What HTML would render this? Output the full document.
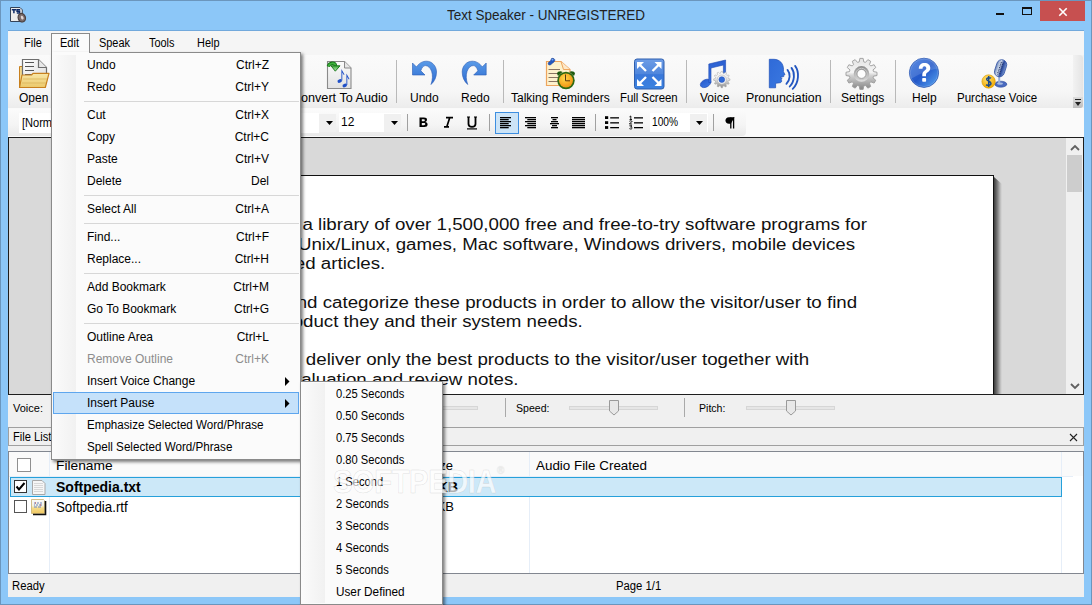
<!DOCTYPE html>
<html><head><meta charset="utf-8">
<style>
*{margin:0;padding:0;box-sizing:border-box}
html,body{width:1092px;height:605px;overflow:hidden;background:#8cc7f8}
body{position:relative;font-family:"Liberation Sans",sans-serif;font-size:12px;color:#000}
.a{position:absolute}
.t{position:absolute;white-space:nowrap;line-height:1}
.sep{position:absolute;width:1px;background:#b9b9b9}
.lbl{position:absolute;white-space:nowrap;line-height:1;font-size:12px;top:91.7px;color:#000}
.mi{position:absolute;left:87px;white-space:nowrap;line-height:1;font-size:12px}
.sc{position:absolute;right:823px;white-space:nowrap;line-height:1;font-size:12px;text-align:right}
.ms{position:absolute;left:84px;width:215px;height:1px;background:#d7d7d7}
.si{position:absolute;left:336px;white-space:nowrap;line-height:1;font-size:12px}
.pg{position:absolute;white-space:nowrap;line-height:1;font-size:16px;color:#111;transform:scaleX(1.169);transform-origin:100% 0}
</style></head><body>
<!-- window frame -->
<div class="a" style="left:0;top:0;width:1092px;height:605px;border:1px solid #6b96bd;background:#8cc7f8"></div>
<div class="t" style="left:447px;top:7px;font-size:15px;color:#222;transform:scaleX(0.9);transform-origin:0 0">Text Speaker - UNREGISTERED</div>
<!-- min / max / close -->
<div class="a" style="left:996px;top:13px;width:8px;height:2px;background:#111"></div>
<div class="a" style="left:1022px;top:7px;width:10px;height:8px;border:1px solid #111;border-top-width:2px"></div>
<div class="a" style="left:1040px;top:1px;width:45px;height:20px;background:#c75050"></div>
<svg class="a" style="left:1058px;top:7px" width="10" height="10" viewBox="0 0 10 10"><path d="M1.3 1.3L8.7 8.7M8.7 1.3L1.3 8.7" stroke="#fff" stroke-width="1.6"/></svg>

<!-- client -->
<div class="a" style="left:8px;top:31px;width:1076px;height:566px;background:#f0f0f0"></div>
<div class="a" style="left:8px;top:30px;width:1076px;height:1px;background:#72a9dc"></div>
<div class="a" style="left:8px;top:31px;width:1076px;height:24px;background:#f5f5f5"></div>
<!-- menubar -->
<div class="t" style="left:24px;top:37.3px;font-size:12px;transform:scaleX(0.92);transform-origin:0 0">File</div>
<div class="t" style="left:99px;top:37.3px;font-size:12px;transform:scaleX(0.91);transform-origin:0 0">Speak</div>
<div class="t" style="left:149px;top:37.3px;font-size:12px;transform:scaleX(0.91);transform-origin:0 0">Tools</div>
<div class="t" style="left:197px;top:37.3px;font-size:12px;transform:scaleX(0.91);transform-origin:0 0">Help</div>

<!-- main toolbar band -->
<div class="a" style="left:8px;top:55px;width:1075px;height:53px;background:linear-gradient(#fafafa,#f6f6f6 70%,#ececec);border-radius:0 3px 3px 0"></div>
<div class="a" style="left:1073px;top:55px;width:10px;height:53px;background:linear-gradient(90deg,#f2f2f2,#e4e4e4);border-radius:0 3px 3px 0"></div>
<div class="a" style="left:1073px;top:97px;width:10px;height:11px;background:linear-gradient(#dcdcdc,#bdbdbd);border-radius:0 0 3px 0"></div>
<svg class="a" style="left:1074px;top:98px" width="8" height="9" viewBox="0 0 8 9"><rect x="1" y="1" width="6" height="1" fill="#222"/><path d="M1 4H7L4 8Z" fill="#222"/></svg>

<div class="lbl" style="left:19px">Open</div>
<div class="lbl" style="left:301px;transform:scaleX(1.053);transform-origin:0 0">onvert To Audio</div>
<div class="sep" style="left:396px;top:60px;height:43px"></div>
<div class="lbl" style="left:410px">Undo</div>
<div class="lbl" style="left:461px">Redo</div>
<div class="sep" style="left:503px;top:60px;height:43px"></div>
<div class="lbl" style="left:511px">Talking Reminders</div>
<div class="lbl" style="left:620px;transform:scaleX(0.95);transform-origin:0 0">Full Screen</div>
<div class="sep" style="left:686px;top:60px;height:43px"></div>
<div class="lbl" style="left:700px">Voice</div>
<div class="lbl" style="left:746px;transform:scaleX(1.03);transform-origin:0 0">Pronunciation</div>
<div class="sep" style="left:830px;top:60px;height:43px"></div>
<div class="lbl" style="left:841px">Settings</div>
<div class="sep" style="left:895px;top:60px;height:43px"></div>
<div class="lbl" style="left:912px">Help</div>
<div class="lbl" style="left:957px;transform:scaleX(0.96);transform-origin:0 0">Purchase Voice</div>

<!-- format toolbar band -->
<div class="a" style="left:8px;top:108px;width:1076px;height:29px;background:#fafafa"></div>
<div class="a" style="left:8px;top:109px;width:738px;height:27px;background:linear-gradient(#fbfbfb,#f4f4f4 60%,#e9e9e9);border-radius:0 4px 4px 0"></div>
<div class="a" style="left:19px;top:113px;width:300px;height:20px;background:#fff"></div>
<div class="t" style="left:22px;top:116.5px;font-size:12px;color:#000;transform:scaleX(0.92);transform-origin:0 0">[Normal]</div>
<div class="a" style="left:319px;top:114px;width:17px;height:18px;background:#f0f0f0"></div>
<svg class="a" style="left:326px;top:120px" width="8" height="6"><path d="M0 1H7L3.5 5Z" fill="#000"/></svg>
<div class="a" style="left:339px;top:113px;width:62px;height:19px;background:#fff"></div>
<div class="a" style="left:384px;top:114px;width:17px;height:18px;background:#f0f0f0"></div>
<div class="t" style="left:341px;top:116px;font-size:12px">12</div>
<svg class="a" style="left:391px;top:120px" width="8" height="6"><path d="M0 1H7L3.5 5Z" fill="#000"/></svg>
<div class="sep" style="left:407px;top:114px;height:17px;background:#a0a0a0"></div>
<svg class="a" style="left:415px;top:114px" width="66" height="18" viewBox="0 0 66 18">
 <path d="M4.5 3.5H9C11 3.5 12 4.4 12 5.8C12 7 11.2 7.8 10 8C11.6 8.2 12.6 9.1 12.6 10.5C12.6 12.2 11.4 13 9.3 13H4.5Z M6.8 5.3V7.3H8.6C9.4 7.3 9.8 6.9 9.8 6.3C9.8 5.7 9.4 5.3 8.6 5.3Z M6.8 9V11.2H8.9C9.8 11.2 10.3 10.8 10.3 10.1C10.3 9.4 9.8 9 8.9 9Z" fill="#000"/>
 <path d="M31 3.6H38M34.8 3.6L31.8 12.8M29 12.8H34" stroke="#000" stroke-width="1.7" fill="none"/>
 <path d="M53.5 3V10C53.5 12 54.5 12.8 57 12.8C59.5 12.8 60.5 12 60.5 10V3" stroke="#000" stroke-width="1.8" fill="none"/>
 <path d="M52 3H55M59 3H62" stroke="#000" stroke-width="1"/>
 <rect x="52" y="14.3" width="10" height="1.2" fill="#000"/>
</svg>
<div class="sep" style="left:489px;top:114px;height:17px;background:#a0a0a0"></div>
<div class="a" style="left:495px;top:112px;width:24px;height:22px;background:#cce4f7;border:1px solid #3d8ee0"></div>
<svg class="a" style="left:0;top:117px" width="660" height="14"><g fill="#000"><rect x="500" y="0" width="11" height="1.3"/><rect x="500" y="2" width="8.699999999999989" height="1.3"/><rect x="500" y="4" width="11" height="1.3"/><rect x="500" y="6" width="8.699999999999989" height="1.3"/><rect x="500" y="8" width="11" height="1.3"/><rect x="500" y="10" width="8.699999999999989" height="1.3"/><rect x="525" y="0" width="11" height="1.3"/><rect x="527.3" y="2" width="8.700000000000045" height="1.3"/><rect x="525" y="4" width="11" height="1.3"/><rect x="527.3" y="6" width="8.700000000000045" height="1.3"/><rect x="525" y="8" width="11" height="1.3"/><rect x="527.3" y="10" width="8.700000000000045" height="1.3"/><rect x="551" y="0" width="7" height="1.3"/><rect x="552.5" y="2" width="4.0" height="1.3"/><rect x="551" y="4" width="7" height="1.3"/><rect x="550" y="6" width="9" height="1.3"/><rect x="552" y="8" width="5" height="1.3"/><rect x="551" y="10" width="7" height="1.3"/><rect x="572" y="0" width="13" height="1.3"/><rect x="572" y="2" width="13" height="1.3"/><rect x="572" y="4" width="13" height="1.3"/><rect x="572" y="6" width="13" height="1.3"/><rect x="572" y="8" width="13" height="1.3"/><rect x="572" y="10" width="13" height="1.3"/></g></svg>
<div class="sep" style="left:595px;top:114px;height:17px;background:#a0a0a0"></div>
<svg class="a" style="left:600px;top:115px" width="50" height="16" viewBox="600 115 50 16"><g fill="#000"><rect x="605" y="116.2" width="3.2" height="2.8"/><rect x="605" y="121.2" width="3.2" height="2.8"/><rect x="605" y="126.1" width="3.2" height="2.8"/><rect x="610.2" y="117.2" width="8.8" height="1.3"/><rect x="634" y="117.2" width="9" height="1.3"/><rect x="610.2" y="122.2" width="8.8" height="1.3"/><rect x="634" y="122.2" width="9" height="1.3"/><rect x="610.2" y="127" width="8.8" height="1.3"/><rect x="634" y="127" width="9" height="1.3"/></g><g fill="none" stroke="#000" stroke-width="0.9"><path d="M629.5 116.8L630.8 116V119.3M629.6 119.5H632"/><path d="M629.4 121.3C630 120.6 632 120.6 632 121.5C632 122.3 629.5 123 629.4 124H632.1"/><path d="M629.4 125.8H632L630.6 127C631.8 127 632.2 127.6 632 128.4C631.7 129.2 630 129.1 629.4 128.6"/></g></svg>
<div class="a" style="left:650px;top:113px;width:58px;height:19px;background:#fff"></div>
<div class="a" style="left:690px;top:114px;width:17px;height:18px;background:#f0f0f0"></div>
<div class="t" style="left:652px;top:116px;font-size:12px;transform:scaleX(0.85);transform-origin:0 0">100%</div>
<svg class="a" style="left:696px;top:120px" width="8" height="6"><path d="M0 1H7L3.5 5Z" fill="#000"/></svg>
<div class="sep" style="left:713px;top:114px;height:17px;background:#a0a0a0"></div>
<svg class="a" style="left:722px;top:115px" width="16" height="16" viewBox="722 115 16 16"><path d="M730.8 117.5V128.5M733.6 117.5V128.5" stroke="#000" stroke-width="1.3"/><path d="M734.6 117.3H729C726.6 117.3 725.5 118.7 725.5 120.6C725.5 122.5 726.6 123.8 729 123.8H730.8Z" fill="#000"/></svg>

<!-- editor -->
<div class="a" style="left:8px;top:137px;width:1076px;height:258px;background:#d9d9d9;border:1px solid #1e1e1e;overflow:hidden">
 <div class="a" style="left:91px;top:37px;width:894px;height:240px;background:#fff;border-top:1px solid #111;border-right:1px solid #111"></div>
 <div class="a" style="left:985px;top:39px;width:8px;height:220px;background:linear-gradient(90deg,rgba(0,0,0,0.72),rgba(0,0,0,0.45) 40%,rgba(0,0,0,0.12) 80%,rgba(0,0,0,0));clip-path:polygon(0 0,100% 7px,100% 100%,0 100%)"></div>
 <div class="a" style="left:1057px;top:0;width:18px;height:256px;background:#f0f0f0"></div>
 <div class="a" style="left:1058px;top:17px;width:15px;height:37px;background:#cdcdcd"></div>
 <svg class="a" style="left:1061px;top:6px" width="10" height="7"><path d="M1 6L5 2L9 6" stroke="#606060" stroke-width="1.8" fill="none"/></svg>
 <svg class="a" style="left:1061px;top:245px" width="10" height="7"><path d="M1 1L5 5L9 1" stroke="#606060" stroke-width="1.8" fill="none"/></svg>
</div>
<div class="pg" style="right:225.4px;top:217.3px">Softpedia is a library of over 1,500,000 free and free-to-try software programs for</div>
<div class="pg" style="right:237.0px;top:236.7px">Windows and Unix/Linux, games, Mac software, Windows drivers, mobile devices</div>
<div class="pg" style="right:706.4px;top:256.0px">and IT-related articles.</div>
<div class="pg" style="right:235.4px;top:294.7px">We review and categorize these products in order to allow the visitor/user to find</div>
<div class="pg" style="right:508.9px;top:314.0px">the exact product they and their system needs.</div>
<div class="pg" style="right:283.4px;top:352.3px">We strive to deliver only the best products to the visitor/user together with</div>
<div class="pg" style="right:573.6px;top:371.6px">self-made evaluation and review notes.</div>
<!-- voice bar -->
<div class="t" style="left:13px;top:403px;font-size:11px">Voice:</div>
<div class="a" style="left:440px;top:406px;width:38px;height:4px;background:#e6e6e6;border:1px solid #d6d6d6"></div>
<div class="sep" style="left:505px;top:398px;height:19px;background:#a9a9a9"></div>
<div class="t" style="left:516px;top:403px;font-size:11px;transform:scaleX(0.96);transform-origin:0 0">Speed:</div>
<div class="a" style="left:569px;top:406px;width:89px;height:4px;background:#e6e6e6;border:1px solid #d6d6d6"></div>
<svg class="a" style="left:609px;top:400px" width="11" height="16" viewBox="0 0 11 16"><path d="M0.5 0.5H9.5V11L5 15L0.5 11Z" fill="#e8e8e8" stroke="#9a9a9a"/></svg>
<div class="sep" style="left:684px;top:398px;height:19px;background:#a9a9a9"></div>
<div class="t" style="left:699px;top:403px;font-size:11px;transform:scaleX(0.96);transform-origin:0 0">Pitch:</div>
<div class="a" style="left:746px;top:406px;width:89px;height:4px;background:#e6e6e6;border:1px solid #d6d6d6"></div>
<svg class="a" style="left:786px;top:400px" width="11" height="16" viewBox="0 0 11 16"><path d="M0.5 0.5H9.5V11L5 15L0.5 11Z" fill="#e8e8e8" stroke="#9a9a9a"/></svg>

<!-- file list bar -->
<div class="a" style="left:8px;top:427px;width:1076px;height:19px;background:#f0f0f0;border:1px solid #a0a0a0"></div>
<div class="t" style="left:13px;top:431px;font-size:12px;transform:scaleX(0.93);transform-origin:0 0">File List</div>
<svg class="a" style="left:1069px;top:433px" width="9" height="9"><path d="M1 1L8 8M8 1L1 8" stroke="#222" stroke-width="1.1"/></svg>

<!-- list -->
<div class="a" style="left:8px;top:451px;width:1076px;height:123px;background:#fff;border:1px solid #828790"></div>
<div class="a" style="left:9px;top:452px;width:1074px;height:24px;background:#fafafa"></div>
<div class="a" style="left:9px;top:476px;width:1064px;height:1px;background:#e6eef8"></div>
<div class="a" style="left:49px;top:452px;width:1px;height:121px;background:#e6eef8"></div>
<div class="a" style="left:529px;top:452px;width:1px;height:121px;background:#e6eef8"></div>
<div class="a" style="left:1061px;top:452px;width:1px;height:121px;background:#e6eef8"></div>
<div class="a" style="left:17px;top:458px;width:14px;height:14px;border:1px solid #8f8f8f;background:#fff"></div>
<div class="t" style="left:56px;top:459px;font-size:13px;transform:scaleX(1.06);transform-origin:0 0">Filename</div>
<div class="t" style="right:639px;top:459px;font-size:13px">Size</div>
<div class="t" style="left:536px;top:459px;font-size:13px;transform:scaleX(1.03);transform-origin:0 0">Audio File Created</div>
<div class="a" style="left:10px;top:477px;width:1052px;height:20px;background:#cce8f8;border:1px solid #26a0da"></div>
<div class="a" style="left:14px;top:480px;width:13px;height:13px;border:1px solid #333;background:#fff"></div>
<svg class="a" style="left:14px;top:480px" width="13" height="13"><path d="M2.5 6.5L5 9.5L10.5 3" stroke="#000" stroke-width="2" fill="none"/></svg>
<div class="t" style="left:56px;top:480px;font-size:14px;font-weight:bold">Softpedia.txt</div>
<div class="t" style="right:634px;top:480px;font-size:14px;font-weight:bold">0 KB</div>
<div class="a" style="left:14px;top:500px;width:13px;height:13px;border:1px solid #555;background:#fff"></div>
<div class="t" style="left:56px;top:499.5px;font-size:14px;transform:scaleX(0.95);transform-origin:0 0">Softpedia.rtf</div>
<div class="t" style="right:638px;top:500px;font-size:13px">0 KB</div>

<!-- status bar -->
<div class="t" style="left:12px;top:580px;font-size:12px;transform:scaleX(0.94);transform-origin:0 0">Ready</div>
<div class="t" style="left:616px;top:580px;font-size:12px;transform:scaleX(0.94);transform-origin:0 0">Page 1/1</div>

<!-- ICONS -->
<!-- app icon -->
<svg class="a" style="left:6px;top:2px" width="24" height="24" viewBox="0 0 24 24">
 <path d="M4.5 5.5H14L16.3 7.8V19.5H4.5Z" fill="#ececec" stroke="#34445a" stroke-width="1"/>
 <path d="M5.8 7.8H10M7.9 7.8V11.2" stroke="#0d2a66" stroke-width="1.5"/>
 <path d="M14.2 7.6H11V9.3H13.6V11H10.8" stroke="#0d2a66" stroke-width="1.4" fill="none"/>
 <ellipse cx="15.8" cy="15.7" rx="3.6" ry="4.3" fill="#7a6c6c" stroke="#4a4040" stroke-width="1.2" transform="rotate(-20 15.8 15.7)"/>
 <ellipse cx="16.2" cy="15.6" rx="1.3" ry="2" fill="#e0d6d6" transform="rotate(-20 16.2 15.6)"/>
</svg>
<!-- Open -->
<svg class="a" style="left:17px;top:57px" width="34" height="33" viewBox="0 0 34 33">
 <defs><linearGradient id="fold" x1="0" y1="0" x2="0" y2="1"><stop offset="0" stop-color="#f8e7a8"/><stop offset="1" stop-color="#ecc96a"/></linearGradient>
 <linearGradient id="docg" x1="0" y1="0" x2="1" y2="1"><stop offset="0" stop-color="#ffffff"/><stop offset="1" stop-color="#dedede"/></linearGradient></defs>
 <path d="M2.5 9.5H6V30.5H2.5Z" fill="#f2d68a" stroke="#c8801e" stroke-width="1"/>
 <path d="M5.5 2.5H21.5L29.5 10.5V22H5.5Z" fill="url(#docg)" stroke="#6e6e6e" stroke-width="1.2"/>
 <path d="M21.5 2.5V10.5H29.5" fill="#e8e8e8" stroke="#6e6e6e" stroke-width="1.2"/>
 <path d="M8 5.5H17M8 9.5H17M8 13.5H17M8 17.5H17" stroke="#555" stroke-width="1"/>
 <path d="M2.5 30.5L5 18H14.5L16 16.3H32L28.3 30.5Z" fill="url(#fold)" stroke="#c8801e" stroke-width="1.2" stroke-linejoin="round"/>
 <path d="M6 22H30M5 26H29" stroke="#d9b45a" stroke-width="0.8"/>
</svg>
<!-- Convert To Audio -->
<svg class="a" style="left:322px;top:56px" width="34" height="34" viewBox="0 0 34 34">
 <defs><linearGradient id="cdoc" x1="0" y1="0" x2="0" y2="1"><stop offset="0" stop-color="#fbfbfb"/><stop offset="1" stop-color="#e2e2e2"/></linearGradient>
 <linearGradient id="garr" x1="0" y1="0" x2="0" y2="1"><stop offset="0" stop-color="#3aa63a"/><stop offset="1" stop-color="#b8f0b0"/></linearGradient></defs>
 <path d="M5.5 5.5H22.5L29 12V32.5H5.5Z" fill="url(#cdoc)" stroke="#8a8a8a" stroke-width="1.1"/>
 <path d="M22.5 5.5V12H29" fill="#e6e6e6" stroke="#8a8a8a" stroke-width="1"/>
 <path d="M6.3 10.5C7.5 6.8 12.8 5.8 13.6 10" fill="none" stroke="#137013" stroke-width="3.4" stroke-linecap="butt"/><path d="M6.3 10.5C7.5 6.8 12.8 5.8 13.6 10" fill="none" stroke="#3eb03e" stroke-width="1.8"/><path d="M9 9.8H18L13.3 15.2Z" fill="url(#garr)" stroke="#137013" stroke-width="0.9" stroke-linejoin="round"/>
 <g fill="#2050c8">
  <ellipse cx="17.7" cy="25" rx="2.3" ry="1.7" transform="rotate(-25 17.7 25)"/>
  <path d="M19.4 24.5V13L22.5 18.5L21.8 19L20.3 16.5V24.5Z"/>
  <ellipse cx="22.7" cy="29.5" rx="2.3" ry="1.7" transform="rotate(-25 22.7 29.5)"/>
  <path d="M24.4 29V17.5L27.5 23L26.8 23.5L25.3 21V29Z"/>
 </g>
</svg>
<!-- Undo / Redo -->
<svg class="a" style="left:406px;top:56px" width="88" height="34" viewBox="0 0 88 34">
 <defs><linearGradient id="ub" x1="0" y1="0" x2="0" y2="1"><stop offset="0" stop-color="#5a9be8"/><stop offset="1" stop-color="#2d6ad0"/></linearGradient></defs>
 <g id="undo">
 <path d="M6.5 7L10.5 11C13 7 16.8 5.2 20.5 5.2C26 5.2 30.5 10 30.5 16C30.5 21 28.5 25.5 25 28.5C26.7 23.5 26.9 19 25.6 15.2C24.3 11.8 22 9.6 19.5 9.6C17.4 9.6 15.8 11.5 14.8 14.8L19 19H6.5Z" fill="url(#ub)" stroke="#2a5cb5" stroke-width="0.6"/>
 </g>
 <g transform="translate(86.7,0) scale(-1,1)">
 <path d="M6.5 7L10.5 11C13 7 16.8 5.2 20.5 5.2C26 5.2 30.5 10 30.5 16C30.5 21 28.5 25.5 25 28.5C26.7 23.5 26.9 19 25.6 15.2C24.3 11.8 22 9.6 19.5 9.6C17.4 9.6 15.8 11.5 14.8 14.8L19 19H6.5Z" fill="url(#ub)" stroke="#2a5cb5" stroke-width="0.6"/>
 </g>
</svg>
<!-- Talking Reminders -->
<svg class="a" style="left:540px;top:54px" width="40" height="40" viewBox="0 0 40 40">
 <defs><radialGradient id="cface" cx="0.4" cy="0.35" r="0.7"><stop offset="0" stop-color="#ffd84a"/><stop offset="1" stop-color="#f09010"/></radialGradient></defs>
 <path d="M6.5 7.5H21L30 15.5V31.5H6.5Z" fill="#fdf1cc" stroke="#eea55e" stroke-width="1.2"/>
 <path d="M21 7.5L23.5 15.5H30" fill="#fde8c8" stroke="#eea55e" stroke-width="1"/>
 <path d="M8.5 15.5H20M8.5 19.5H20M8.5 23.5H18M8.5 27.5H18" stroke="#8a7462" stroke-width="1"/>
 <path d="M11.5 4.5C13.5 3.8 15.2 5 14.8 6.8L13.5 8.5L12 9.5C10.5 11.5 8.5 11.5 8.2 10C7.9 8.8 9 7.6 10.3 7.2Z" fill="#2458c0" stroke="#183f90" stroke-width="0.5"/>
 <ellipse cx="12.5" cy="5.8" rx="1" ry="0.8" fill="#8ab4f0"/>
 <path d="M17 19.5C17.5 17.5 20.5 16.5 22.5 18L18 22Z" fill="#1e5a10"/>
 <path d="M35 19.5C34.5 17.5 31.5 16.5 29.5 18L34 22Z" fill="#1e5a10"/>
 <circle cx="26" cy="26.5" r="8.7" fill="#2e6a12"/>
 <circle cx="26" cy="26.5" r="7" fill="url(#cface)"/>
 <path d="M25.5 20.5V26.8H30" stroke="#5a3a10" stroke-width="1" fill="none"/>
</svg>
<!-- Full Screen -->
<svg class="a" style="left:630px;top:54px" width="40" height="40" viewBox="0 0 40 40">
 <defs><linearGradient id="fsb" x1="0" y1="0" x2="0" y2="1"><stop offset="0" stop-color="#6e9de6"/><stop offset="0.5" stop-color="#4f86dc"/><stop offset="0.52" stop-color="#3a78da"/><stop offset="1" stop-color="#3a82e0"/></linearGradient></defs>
 <rect x="4.5" y="5" width="29.5" height="30" rx="2.5" fill="url(#fsb)" stroke="#2f5fae" stroke-width="1"/>
 <g stroke="#fff" stroke-width="2.3" fill="#fff">
  <path d="M9 10L16 17M29.5 10L22.5 17M9 30L16 23M29.5 30L22.5 23" />
 </g>
 <g fill="#fff">
  <path d="M7 8H14L7 15Z"/><path d="M31.5 8H24.5L31.5 15Z"/><path d="M7 32H14L7 25Z"/><path d="M31.5 32H24.5L31.5 25Z"/>
 </g>
</svg>
<!-- Voice -->
<svg class="a" style="left:696px;top:54px" width="40" height="40" viewBox="0 0 40 40">
 <defs><linearGradient id="gear1" x1="0" y1="0" x2="0" y2="1"><stop offset="0" stop-color="#ffffff"/><stop offset="0.45" stop-color="#e8e8e8"/><stop offset="1" stop-color="#8a8a8a"/></linearGradient>
 <linearGradient id="nb" x1="0" y1="0" x2="0" y2="1"><stop offset="0" stop-color="#2a5ed0"/><stop offset="1" stop-color="#3a74e0"/></linearGradient></defs>
 <g fill="url(#nb)" stroke="#1c48b4" stroke-width="0.6">
 <ellipse cx="9.6" cy="29.4" rx="5.6" ry="3.7" transform="rotate(-28 9.6 29.4)"/>
 <path d="M12.8 28.5V10L29.6 6V24H27.4V11L15 14V28.5Z"/>
 </g>
 <g transform="translate(25.8 25.6)">
  <path d="M-1.10 -6.51 L-0.69 -8.17 L0.69 -8.17 L1.10 -6.51 L2.30 -6.19 L3.49 -7.42 L4.68 -6.73 L4.21 -5.09 L5.09 -4.21 L6.73 -4.68 L7.42 -3.49 L6.19 -2.30 L6.51 -1.10 L8.17 -0.69 L8.17 0.69 L6.51 1.10 L6.19 2.30 L7.42 3.49 L6.73 4.68 L5.09 4.21 L4.21 5.09 L4.68 6.73 L3.49 7.42 L2.30 6.19 L1.10 6.51 L0.69 8.17 L-0.69 8.17 L-1.10 6.51 L-2.30 6.19 L-3.49 7.42 L-4.68 6.73 L-4.21 5.09 L-5.09 4.21 L-6.73 4.68 L-7.42 3.49 L-6.19 2.30 L-6.51 1.10 L-8.17 0.69 L-8.17 -0.69 L-6.51 -1.10 L-6.19 -2.30 L-7.42 -3.49 L-6.73 -4.68 L-5.09 -4.21 L-4.21 -5.09 L-4.68 -6.73 L-3.49 -7.42 L-2.30 -6.19Z" fill="url(#gear1)" stroke="#a0a0a0" stroke-width="0.5"/>
  <circle r="4.6" fill="#f4f4f4" stroke="#b0b0b0" stroke-width="0.6"/>
  <circle r="2.9" fill="#2f6ad8" stroke="#1c48b4" stroke-width="0.5"/>
 </g>
</svg>
<!-- Pronunciation -->
<svg class="a" style="left:764px;top:54px" width="40" height="40" viewBox="0 0 40 40">
 <defs><linearGradient id="hd" x1="0" y1="0" x2="1" y2="1"><stop offset="0" stop-color="#2f6ad8"/><stop offset="1" stop-color="#3a78e0"/></linearGradient></defs>
 <path d="M5.3 5.3H10C15.5 5.3 19.5 9.5 19.5 15.3L19.4 17.5L21 20.7L19.3 21.5L19.8 22.5L16.3 23.3L18.2 24.5L17.1 25.3L17.6 26.5C17.8 27.8 17.2 28.5 16.2 28.7L11.6 29.3V33.8H5.3Z" fill="url(#hd)" stroke="#1d4fb8" stroke-width="0.7"/>
 <g fill="none" stroke="#2256c0" stroke-width="1.8" stroke-linecap="round">
  <path d="M23.5 15.9C26.5 19.5 26.5 25.5 22.4 29.8"/>
  <path d="M27.5 13.9C31 18.5 31 27 25.7 32.5"/>
  <path d="M31.1 11.9C35.3 17.5 35.3 28.5 28.7 34.8"/>
 </g>
</svg>
<!-- Settings gear -->
<svg class="a" style="left:842px;top:54px" width="40" height="40" viewBox="0 0 40 40">
 <defs><linearGradient id="sg" x1="0" y1="0" x2="0" y2="1"><stop offset="0" stop-color="#e4e4e4"/><stop offset="0.45" stop-color="#f4f4f4"/><stop offset="0.55" stop-color="#d2d2d2"/><stop offset="1" stop-color="#858585"/></linearGradient>
 <linearGradient id="sg2" x1="0" y1="0" x2="0" y2="1"><stop offset="0" stop-color="#8c8c8c"/><stop offset="1" stop-color="#e0e0e0"/></linearGradient></defs>
 <g transform="translate(19.5 19.9)">
  <path fill="url(#sg)" stroke="#9c9c9c" stroke-width="0.9" stroke-linejoin="round" d="M-2.29 -11.98 L-1.63 -15.51 L1.63 -15.51 L2.29 -11.98 L4.01 -11.52 L6.35 -14.25 L9.17 -12.62 L7.97 -9.24 L9.24 -7.97 L12.62 -9.17 L14.25 -6.35 L11.52 -4.01 L11.98 -2.29 L15.51 -1.63 L15.51 1.63 L11.98 2.29 L11.52 4.01 L14.25 6.35 L12.62 9.17 L9.24 7.97 L7.97 9.24 L9.17 12.62 L6.35 14.25 L4.01 11.52 L2.29 11.98 L1.63 15.51 L-1.63 15.51 L-2.29 11.98 L-4.01 11.52 L-6.35 14.25 L-9.17 12.62 L-7.97 9.24 L-9.24 7.97 L-12.62 9.17 L-14.25 6.35 L-11.52 4.01 L-11.98 2.29 L-15.51 1.63 L-15.51 -1.63 L-11.98 -2.29 L-11.52 -4.01 L-14.25 -6.35 L-12.62 -9.17 L-9.24 -7.97 L-7.97 -9.24 L-9.17 -12.62 L-6.35 -14.25 L-4.01 -11.52Z"/>
  <circle r="7.8" fill="url(#sg2)"/>
  <circle r="5.6" fill="none" stroke="#c8c8c8" stroke-width="1"/>
  <circle r="4.5" fill="#fdfdfd" stroke="#8a8a8a" stroke-width="0.7"/>
 </g>
</svg>
<!-- Help -->
<svg class="a" style="left:906px;top:54px" width="36" height="38" viewBox="0 0 36 38">
 <defs><linearGradient id="hb" x1="0" y1="0" x2="1" y2="1"><stop offset="0" stop-color="#3a78e0"/><stop offset="0.5" stop-color="#2458c8"/><stop offset="1" stop-color="#5aaaf4"/></linearGradient></defs>
 <circle cx="18" cy="18.8" r="14.6" fill="url(#hb)" stroke="#2a56b0" stroke-width="0.8"/>
 <path d="M3.6 21C3 12 9.5 4.2 18 4.2C25 4.2 30.5 9 32 14.5C27 15.5 20 17 13 20.5C9 22.5 5.5 24.5 4 25.5Z" fill="rgba(255,255,255,0.14)"/>
 <circle cx="18" cy="18.8" r="13.8" fill="none" stroke="rgba(255,255,255,0.25)" stroke-width="0.6"/>
 <path d="M12.8 14.8C12.8 11 15.2 9 18.5 9C22 9 24.3 11 24.3 14C24.3 16.8 22.5 17.8 21 18.8C20.2 19.4 20 20.2 20 21.3V22.3H16.3V20.8C16.3 18.8 17 17.8 18.4 16.8C19.7 15.9 20.3 15.3 20.3 14.3C20.3 13 19.5 12.3 18.4 12.3C17.2 12.3 16.5 13.2 16.5 14.8Z" fill="#fff"/>
 <rect x="16.2" y="24" width="3.9" height="3.8" rx="0.8" fill="#fff"/>
</svg>
<!-- Purchase Voice -->
<svg class="a" style="left:975px;top:54px" width="40" height="40" viewBox="0 0 40 40">
 <defs><linearGradient id="mic" x1="0" y1="0" x2="1" y2="0"><stop offset="0" stop-color="#6a84b8"/><stop offset="0.35" stop-color="#d8e2f0"/><stop offset="0.65" stop-color="#2a4aa0"/><stop offset="1" stop-color="#7a98d0"/></linearGradient>
 <radialGradient id="coin" cx="0.4" cy="0.3" r="0.7"><stop offset="0" stop-color="#ffe070"/><stop offset="1" stop-color="#f0a800"/></radialGradient></defs>
 <ellipse cx="25.8" cy="30.2" rx="6" ry="3" fill="#4a6ac0" stroke="#2a4a98" stroke-width="0.6"/>
 <ellipse cx="25" cy="29.6" rx="3" ry="1.2" fill="#a8bce0"/>
 <path d="M23.2 22V29.3H25.2V22Z" fill="#9ab0d8"/>
 <rect x="20.5" y="5.5" width="10" height="17.5" rx="5" fill="url(#mic)" stroke="#3a5aa8" stroke-width="0.8" transform="rotate(18 25.5 14.5)"/>
 <path d="M24.3 8L24.3 21M26.3 8L26.3 21" stroke="#1e2e60" stroke-width="1" stroke-dasharray="1 0.8" transform="rotate(18 25.5 14.5)"/>
 <circle cx="13.6" cy="27.5" r="6.7" fill="url(#coin)" stroke="#d89a00" stroke-width="0.6"/>
 <path d="M16 24.3C15.2 23.5 12.2 23.2 11.6 25C11 27 16 27 16 29.5C16 31.5 12.5 31.8 11.2 30.6M13.7 22V33" stroke="#1a4a8a" stroke-width="1.5" fill="none"/>
</svg>
<!-- list icons -->
<svg class="a" style="left:31px;top:479px" width="16" height="17" viewBox="0 0 16 17">
 <path d="M1.5 1.5H11L14 4.5V15.5H1.5Z" fill="#f6f6f6" stroke="#a8a8a8"/>
 <path d="M3 4.5H12M3 6.5H12M3 8.5H12M3 10.5H12M3 12.5H12" stroke="#d0d0d0" stroke-width="0.8"/>
</svg>
<svg class="a" style="left:30px;top:498px" width="17" height="18" viewBox="0 0 17 18">
 <defs><linearGradient id="rtfg" x1="0" y1="0" x2="0" y2="1"><stop offset="0" stop-color="#fafafa"/><stop offset="0.45" stop-color="#f4f0e0"/><stop offset="0.6" stop-color="#f6dc8a"/><stop offset="1" stop-color="#f0c860"/></linearGradient></defs>
 <path d="M1.5 1.5H13.5L14.5 2.5V15.5H1.5Z" fill="url(#rtfg)" stroke="#c8b070" stroke-width="0.8"/>
 <path d="M4 5H6M7 5H9M10 5H12M4 7H5M6 7H8M9 7H12M4 9H7M8 9H11" stroke="#5a7ac0" stroke-width="0.9"/>
 <path d="M5 5H6M10 7H11" stroke="#d04040" stroke-width="0.9"/>
 <path d="M15.5 3V16.5H3" stroke="#111" stroke-width="1.6" fill="none"/>
</svg>

<!-- Edit tab + dropdown -->
<div class="a" style="left:51px;top:33px;width:39px;height:21px;background:#fbfbfb;border:1px solid #8a8a8a;border-bottom:none"></div>
<div class="t" style="left:60px;top:37.3px;font-size:12px;transform:scaleX(0.92);transform-origin:0 0">Edit</div>
<div class="a" style="left:51px;top:52px;width:250px;height:408px;background:#fbfbfb;border:1px solid #8a8a8a;border-top:none;box-shadow:2px 2px 3px rgba(0,0,0,0.5)"></div>
<div class="a" style="left:89px;top:52px;width:212px;height:1px;background:#8a8a8a"></div>
<div class="a" style="left:52px;top:55px;width:24px;height:404px;background:linear-gradient(90deg,#fbfbfb,#f1f1f1)"></div>
<div class="mi" style="top:59px;color:#000">Undo</div>
<div class="sc" style="top:59px;color:#000">Ctrl+Z</div>
<div class="mi" style="top:81px;color:#000">Redo</div>
<div class="sc" style="top:81px;color:#000">Ctrl+Y</div>
<div class="ms" style="top:101px"></div>
<div class="mi" style="top:109px;color:#000">Cut</div>
<div class="sc" style="top:109px;color:#000">Ctrl+X</div>
<div class="mi" style="top:131px;color:#000">Copy</div>
<div class="sc" style="top:131px;color:#000">Ctrl+C</div>
<div class="mi" style="top:153px;color:#000">Paste</div>
<div class="sc" style="top:153px;color:#000">Ctrl+V</div>
<div class="mi" style="top:175px;color:#000">Delete</div>
<div class="sc" style="top:175px;color:#000">Del</div>
<div class="ms" style="top:195px"></div>
<div class="mi" style="top:203px;color:#000">Select All</div>
<div class="sc" style="top:203px;color:#000">Ctrl+A</div>
<div class="ms" style="top:223px"></div>
<div class="mi" style="top:231px;color:#000">Find...</div>
<div class="sc" style="top:231px;color:#000">Ctrl+F</div>
<div class="mi" style="top:253px;color:#000">Replace...</div>
<div class="sc" style="top:253px;color:#000">Ctrl+H</div>
<div class="ms" style="top:273px"></div>
<div class="mi" style="top:281px;color:#000">Add Bookmark</div>
<div class="sc" style="top:281px;color:#000">Ctrl+M</div>
<div class="mi" style="top:303px;color:#000">Go To Bookmark</div>
<div class="sc" style="top:303px;color:#000">Ctrl+G</div>
<div class="ms" style="top:323px"></div>
<div class="mi" style="top:331px;color:#000">Outline Area</div>
<div class="sc" style="top:331px;color:#000">Ctrl+L</div>
<div class="mi" style="top:353px;color:#8d8d8d">Remove Outline</div>
<div class="sc" style="top:353px;color:#8d8d8d">Ctrl+K</div>
<div class="mi" style="top:375px;color:#000">Insert Voice Change</div>
<svg class="a" style="left:285px;top:377px" width="5" height="9"><path d="M0 0L4.5 4.5L0 9Z" fill="#000"/></svg>
<div class="a" style="left:53px;top:392px;width:246px;height:22px;background:#c5e1fa;border:1px solid #5ea6ee"></div>
<div class="mi" style="top:397px;color:#000">Insert Pause</div>
<svg class="a" style="left:285px;top:399px" width="5" height="9"><path d="M0 0L4.5 4.5L0 9Z" fill="#000"/></svg>
<div class="mi" style="top:419px;color:#000;transform:scaleX(0.967);transform-origin:0 0">Emphasize Selected Word/Phrase</div>
<div class="mi" style="top:441px;color:#000;transform:scaleX(0.97);transform-origin:0 0">Spell Selected Word/Phrase</div>
<!-- submenu -->
<div class="a" style="left:300px;top:381px;width:143px;height:224px;background:#fbfbfb;border:1px solid #8a8a8a;box-shadow:2px 2px 3px rgba(0,0,0,0.5)"></div>
<div class="a" style="left:301px;top:383px;width:24px;height:220px;background:linear-gradient(90deg,#fbfbfb,#f1f1f1)"></div>
<div class="si" style="top:388px;transform:scaleX(0.93);transform-origin:0 0">0.25 Seconds</div>
<div class="si" style="top:410px;transform:scaleX(0.93);transform-origin:0 0">0.50 Seconds</div>
<div class="si" style="top:432px;transform:scaleX(0.93);transform-origin:0 0">0.75 Seconds</div>
<div class="si" style="top:454px;transform:scaleX(0.93);transform-origin:0 0">0.80 Seconds</div>
<div class="si" style="top:476px;transform:scaleX(0.93);transform-origin:0 0">1 Second</div>
<div class="si" style="top:498px;transform:scaleX(0.93);transform-origin:0 0">2 Seconds</div>
<div class="si" style="top:520px;transform:scaleX(0.93);transform-origin:0 0">3 Seconds</div>
<div class="si" style="top:542px;transform:scaleX(0.93);transform-origin:0 0">4 Seconds</div>
<div class="si" style="top:564px;transform:scaleX(0.93);transform-origin:0 0">5 Seconds</div>
<div class="si" style="top:586px;transform:scaleX(0.98);transform-origin:0 0">User Defined</div>
<div class="t" style="left:333px;top:465px;font-size:33px;font-weight:bold;color:rgba(255,255,255,0.7);-webkit-text-stroke:0.6px rgba(120,120,120,0.22);transform:scaleX(0.885);transform-origin:0 0;letter-spacing:-0.5px">SOFTPEDIA</div>
<div class="t" style="left:497px;top:466px;font-size:10px;color:rgba(255,255,255,0.6);text-shadow:0 0 1px rgba(0,0,0,0.2)">®</div>
</body></html>
